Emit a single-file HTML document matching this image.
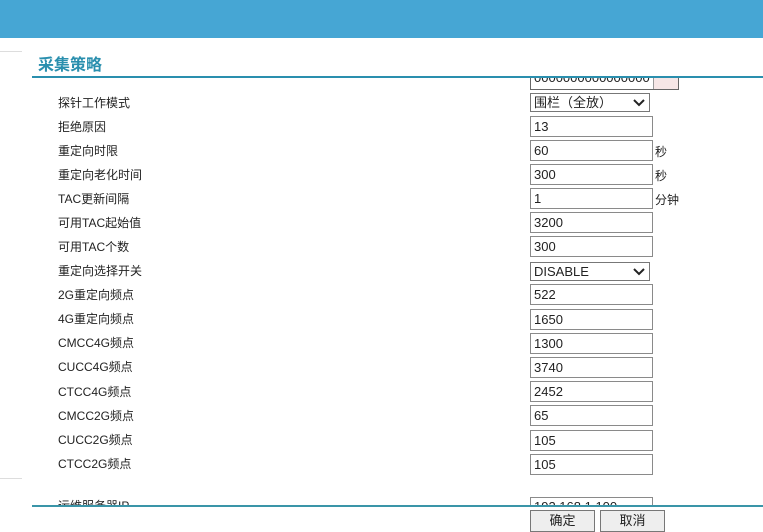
<!DOCTYPE html>
<html><head><meta charset="utf-8"><style>
body{margin:0;width:763px;height:522px;overflow:hidden;background:#fff;position:relative;font-family:"Liberation Sans","Noto Sans CJK SC",sans-serif;font-size:12px;color:#222}
.a{position:absolute}
.lbl{position:absolute;left:58px;font-size:12px;line-height:14px}
.in{position:absolute;left:530px;width:118px;height:19px;border:1px solid #8a8a8a;background:#fff;font-size:13px;line-height:19px;padding-left:3px;box-sizing:content-box}
.sel{position:absolute;left:530px;width:115px;height:17px;border:1px solid #777;font-size:13px;line-height:17px;padding-left:3px}
.sel svg{position:absolute;right:4px;top:5px}
.u{position:absolute;left:655px;font-size:12px}
.btn{position:absolute;top:510px;height:20px;border:1px solid #777;background:#eee;font-size:13px;text-align:center;line-height:20px}
</style></head><body>
<div class="a" style="left:530px;top:66px;width:147px;height:22px;border:1px solid #666;background:#fff;overflow:hidden"><div style="position:absolute;top:3px;left:3px;font-size:13px;line-height:15px">0000000000000000</div><div style="position:absolute;right:0;top:0;width:24px;height:22px;background:#f6e6e6;border-left:1px solid #999"></div></div>
<div class="a" style="left:0;top:38px;width:763px;height:38px;background:#fff"></div>
<div class="a" style="left:0;top:0;width:763px;height:38px;background:#46a6d4"></div>
<div class="a" style="left:0;top:51px;width:22px;height:1px;background:#ddd"></div>
<div class="a" style="left:0;top:478px;width:22px;height:1px;background:#ddd"></div>
<div class="a" style="left:38px;top:51px;font-size:16px;font-weight:bold;color:#2a8fae">采集策略</div>
<div class="a" style="left:32px;top:76px;width:731px;height:2px;background:#2a8fae"></div>

<div class="lbl" style="top:96px">探针工作模式</div>
<div class="sel" style="top:93px">围栏（全放）<svg width="12" height="8"><path d="M1 1L6 6L11 1" stroke="#222" stroke-width="2" fill="none"/></svg></div>
<div class="lbl" style="top:120px">拒绝原因</div><div class="in" style="top:116px">13</div>
<div class="lbl" style="top:144px">重定向时限</div><div class="in" style="top:140px">60</div><div class="u" style="top:143px">秒</div>
<div class="lbl" style="top:168px">重定向老化时间</div><div class="in" style="top:164px">300</div><div class="u" style="top:167px">秒</div>
<div class="lbl" style="top:192px">TAC更新间隔</div><div class="in" style="top:188px">1</div><div class="u" style="top:191px">分钟</div>
<div class="lbl" style="top:216px">可用TAC起始值</div><div class="in" style="top:212px">3200</div>
<div class="lbl" style="top:240px">可用TAC个数</div><div class="in" style="top:236px">300</div>
<div class="lbl" style="top:264px">重定向选择开关</div>
<div class="sel" style="top:262px">DISABLE<svg width="12" height="8"><path d="M1 1L6 6L11 1" stroke="#222" stroke-width="2" fill="none"/></svg></div>
<div class="lbl" style="top:288px">2G重定向频点</div><div class="in" style="top:284px">522</div>
<div class="lbl" style="top:312px">4G重定向频点</div><div class="in" style="top:309px">1650</div>
<div class="lbl" style="top:336px">CMCC4G频点</div><div class="in" style="top:333px">1300</div>
<div class="lbl" style="top:360px">CUCC4G频点</div><div class="in" style="top:357px">3740</div>
<div class="lbl" style="top:385px">CTCC4G频点</div><div class="in" style="top:381px">2452</div>
<div class="lbl" style="top:409px">CMCC2G频点</div><div class="in" style="top:405px">65</div>
<div class="lbl" style="top:433px">CUCC2G频点</div><div class="in" style="top:430px">105</div>
<div class="lbl" style="top:457px">CTCC2G频点</div><div class="in" style="top:454px">105</div>
<div class="lbl" style="top:499px">运维服务器IP</div><div class="in" style="top:497px;height:10px;overflow:hidden;line-height:18px">192.168.1.100</div>
<div class="a" style="left:32px;top:505px;width:731px;height:17px;background:#fff"></div>
<div class="a" style="left:32px;top:505px;width:731px;height:2px;background:#3a95a8"></div>
<div class="btn" style="left:530px;width:63px">确定</div>
<div class="btn" style="left:600px;width:63px">取消</div>
</body></html>
